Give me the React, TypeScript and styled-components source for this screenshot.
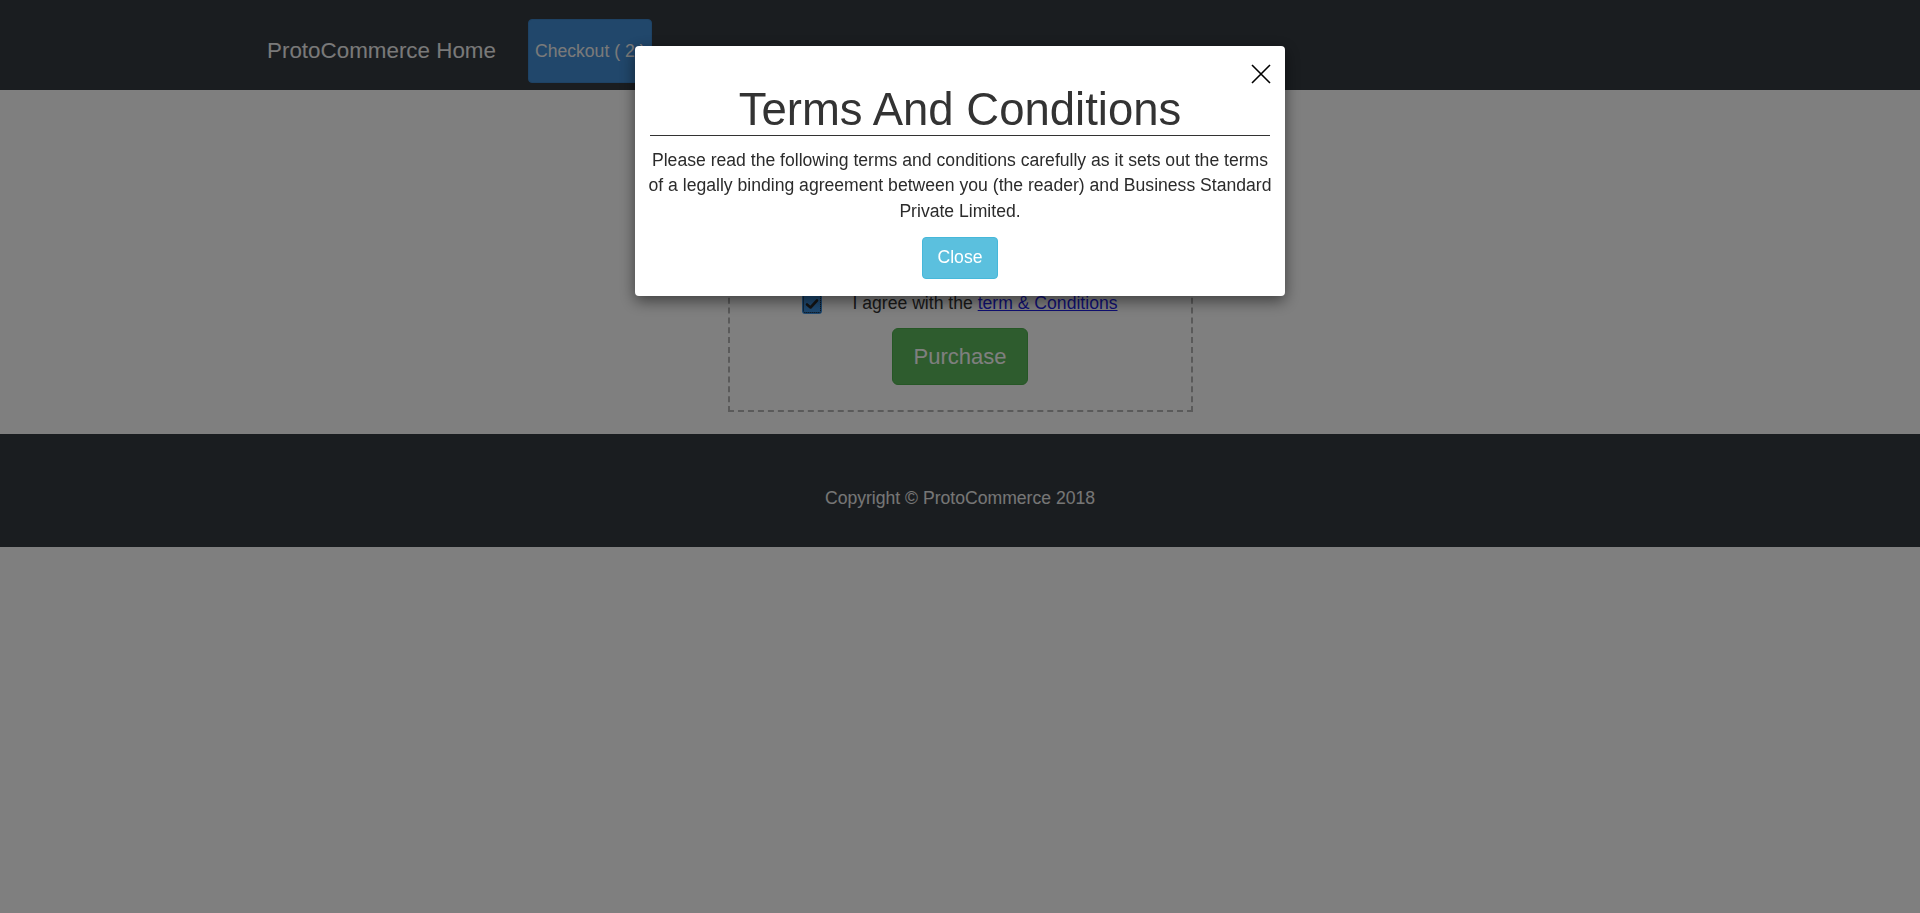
import React, { useState } from "react";
import styled, { createGlobalStyle } from "styled-components";

const GlobalStyle = createGlobalStyle`
	html, body {
		margin: 0;
		padding: 0;
		background: #ffffff;
	}
	body {
		font-family: "Liberation Sans", Arial, Helvetica, sans-serif;
		font-size: 17.6px;
		line-height: 1.42857;
		color: #333;
	}
	* {
		box-sizing: border-box;
	}
`

const Page = styled.div`
	min-height: 100vh;
	display: flex;
	flex-direction: column;
`

const NavBar = styled.nav`
	background: #343a40;
	height: 90px;
	padding: 19px 0 7px;
`

const NavContainer = styled.div`
	width: 1386px;
	margin: 0 auto;
	display: flex;
	align-items: center;
	height: 100%;
`

const Brand = styled.a`
	font-size: 22.4px;
	color: #f2f2f2;
	text-decoration: none;
	margin-right: 32px;
	line-height: 1.2;
`

const CheckoutButton = styled.button`
	height: 64px;
	padding: 0 6px;
	background: #428ed6;
	border: 1px solid #3c84c9;
	border-radius: 4px;
	color: #f4f4f4;
	font-family: inherit;
	font-size: 17.6px;
	display: flex;
	align-items: center;
	cursor: pointer;
`

const Main = styled.main`
	height: 344px;
	padding-top: 60px;
	display: flex;
	justify-content: center;
	align-items: flex-start;
`

const DashedBox = styled.div`
	width: 465px;
	border: 2px dashed #b4b4b4;
	padding: 55px 20px 24.3px;
	display: flex;
	flex-direction: column;
	align-items: center;
`

const LocationInput = styled.input`
	align-self: stretch;
	height: 44px;
	margin-bottom: 40.5px;
	border: 1px solid #ccc;
	border-radius: 4px;
	padding: 0 12px;
	font-family: inherit;
	font-size: 17.6px;
`

const AgreeRow = styled.div`
	display: flex;
	align-items: center;
	height: 25px;
	margin-bottom: 11.8px;
`

const FakeCheck = styled.span<{ checked: boolean }>`
	width: 20px;
	height: 20px;
	margin-right: 30px;
	border-radius: 3px;
	background: ${(p) => (p.checked ? "#3d92e2" : "#fff")};
	outline: 1px dotted #111;
	outline-offset: -2px;
	display: flex;
	align-items: center;
	justify-content: center;
	cursor: pointer;
`

const TermsLink = styled.a`
	color: #1f1fe6;
	text-decoration: underline;
	cursor: pointer;
`

const PurchaseButton = styled.button`
	height: 57px;
	padding: 0 21px;
	background: #5cb85c;
	border: 1px solid #4cae4c;
	border-radius: 6px;
	color: #fff;
	font-family: inherit;
	font-size: 22px;
	cursor: pointer;
`

const Footer = styled.footer`
	background: #343a40;
	height: 113px;
	padding-top: 51.5px;
	text-align: center;
	color: #ececec;
	line-height: 25px;
`

// 모달 뒤를 덮는 어두운 배경
const Backdrop = styled.div`
	position: fixed;
	inset: 0;
	background: rgba(0, 0, 0, 0.5);
	display: flex;
	justify-content: center;
	align-items: flex-start;
	padding-top: 46px;
	z-index: 10;
`

const ModalBox = styled.div`
	position: relative;
	width: 650px;
	background: #fff;
	border-radius: 4px;
	box-shadow: 0 5px 15px rgba(0, 0, 0, 0.5);
	padding: 15px 15px 17.2px;
	display: flex;
	flex-direction: column;
	align-items: center;
`

const CloseX = styled.button`
	position: absolute;
	top: 17px;
	right: 13px;
	width: 22px;
	height: 22px;
	padding: 0;
	border: none;
	background: transparent;
	cursor: pointer;
	display: flex;
	align-items: center;
	justify-content: center;
`

const ModalTitle = styled.h1`
	align-self: stretch;
	margin: 24px 0 0;
	font-size: 45.5px;
	font-weight: 400;
	line-height: 50px;
	text-align: center;
	color: #333;
	border-bottom: 1px solid #333;
`

const ModalText = styled.p`
	margin: 12.3px -5px 0;
	text-align: center;
	color: #2b2b2b;
	line-height: 25.14px;
`

const InfoButton = styled.button`
	margin-top: 13px;
	padding: 7.5px 15px;
	line-height: 25px;
	background: #5bc0de;
	border: 1px solid #46b8da;
	border-radius: 4px;
	color: #fff;
	font-family: inherit;
	font-size: 17.6px;
	cursor: pointer;
`

const App: React.FC = () => {
	const [agreed, setAgreed] = useState<boolean>(true);
	const [modalOpen, setModalOpen] = useState<boolean>(true);
	const [location, setLocation] = useState<string>("");

	return (
		<Page>
			<GlobalStyle />
			<NavBar>
				<NavContainer>
					<Brand href="#">ProtoCommerce Home</Brand>
					<CheckoutButton>Checkout ( 2 )</CheckoutButton>
				</NavContainer>
			</NavBar>

			<Main>
				<DashedBox>
					{/* 모달 뒤에 가려지는 배송지 입력 */}
					<LocationInput
						type="text"
						aria-label="delivery location"
						value={location}
						onChange={(e) => setLocation(e.target.value)}
					/>
					<AgreeRow>
						<FakeCheck checked={agreed} onClick={() => setAgreed(!agreed)}>
							{agreed && (
								<svg width="14" height="12" viewBox="0 0 14 12">
									<path d="M2 6.5 L5.5 9.5 L12 2.5" stroke="#2a2a2a" strokeWidth="2.6" fill="none" strokeLinecap="round" strokeLinejoin="round" />
								</svg>
							)}
						</FakeCheck>
						<span>
							I agree with the <TermsLink onClick={() => setModalOpen(true)}>term &amp; Conditions</TermsLink>
						</span>
					</AgreeRow>
					<PurchaseButton>Purchase</PurchaseButton>
				</DashedBox>
			</Main>

			<Footer>Copyright © ProtoCommerce 2018</Footer>

			{modalOpen && (
				<Backdrop>
					<ModalBox>
						<CloseX onClick={() => setModalOpen(false)} aria-label="close">
							<svg width="20" height="20" viewBox="0 0 20 20">
								<path d="M1 1 L19 19 M19 1 L1 19" stroke="#000" strokeWidth="1.6" />
							</svg>
						</CloseX>
						<ModalTitle>Terms And Conditions</ModalTitle>
						<ModalText>
							Please read the following terms and conditions carefully as it sets out the terms of a legally binding agreement between you (the reader) and Business Standard Private Limited.
						</ModalText>
						<InfoButton onClick={() => setModalOpen(false)}>Close</InfoButton>
					</ModalBox>
				</Backdrop>
			)}
		</Page>
	)
}

export default App;
